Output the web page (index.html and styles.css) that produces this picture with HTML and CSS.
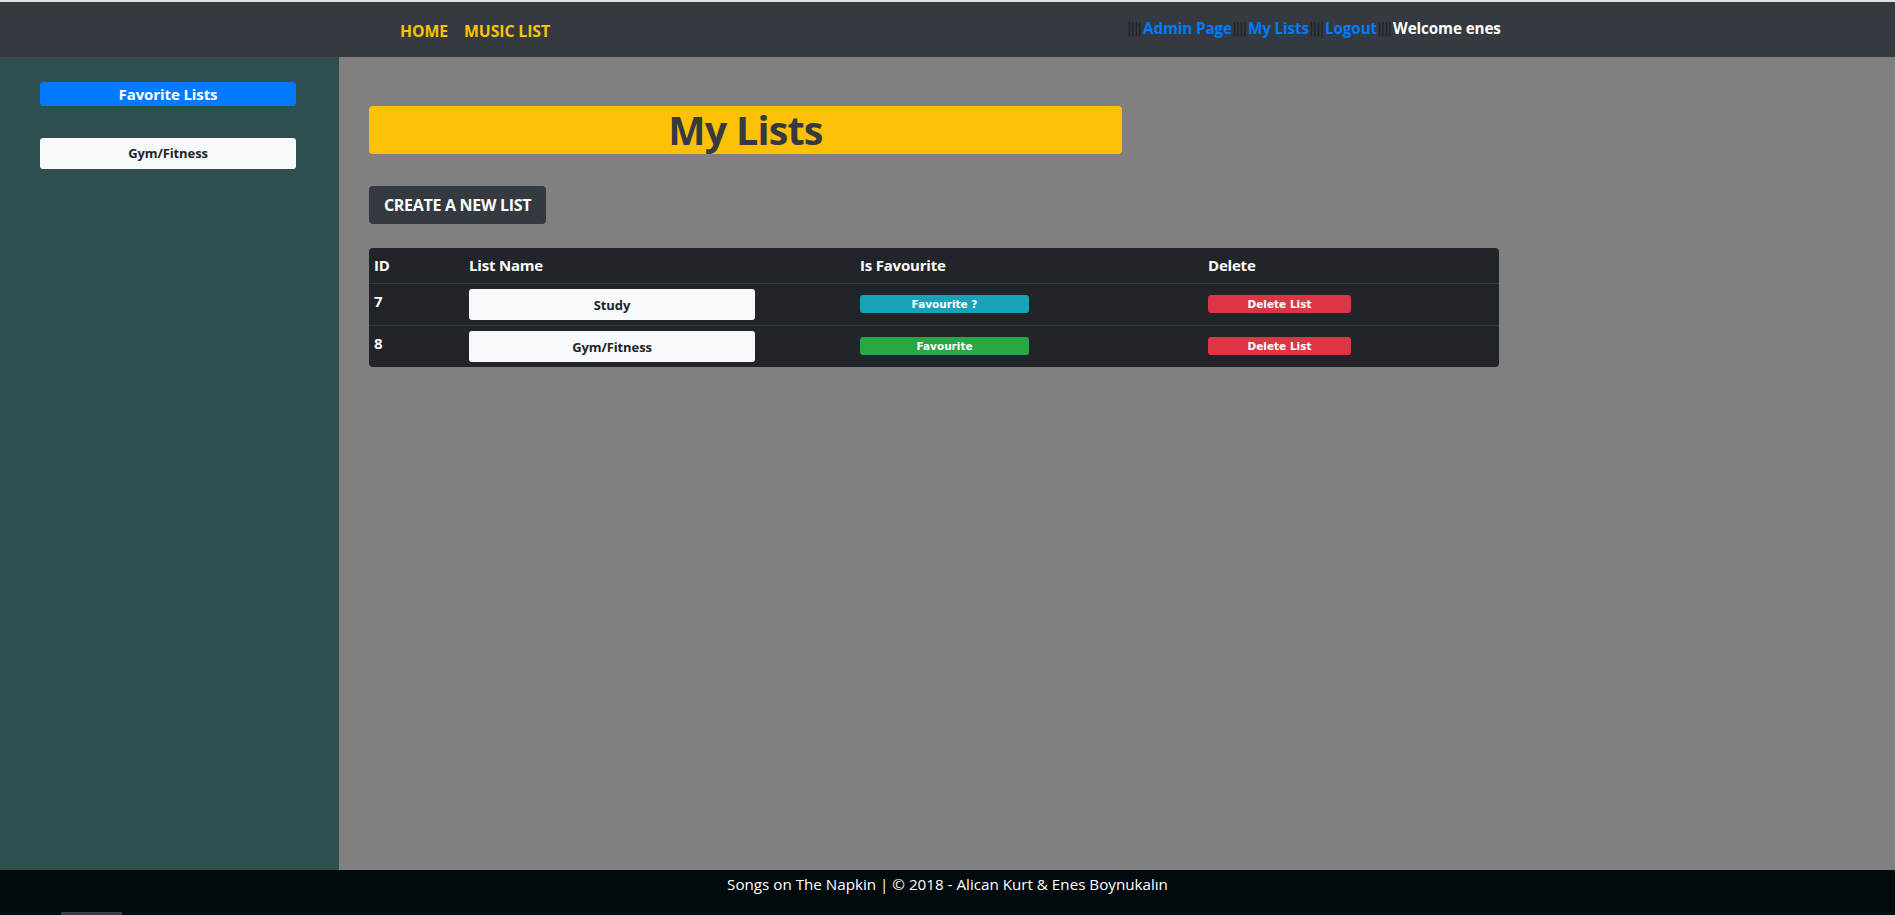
FILE: index.html
```html
<!DOCTYPE html>
<html lang="en">
<head>
<meta charset="utf-8">
<title>My Lists - Songs on The Napkin</title>
<link rel="stylesheet" href="styles.css">
</head>
<body>
<div class="page">
  <nav class="navbar">
    <div class="nav-left">
      <a class="nav-link" href="#">HOME</a>
      <a class="nav-link" href="#">MUSIC LIST</a>
    </div>
    <div class="nav-right">
      <span class="pipes">||||</span><a class="user-link" href="#">Admin Page</a><span class="pipes">||||</span><a class="user-link" href="#">My Lists</a><span class="pipes">||||</span><a class="user-link" href="#">Logout</a><span class="pipes">||||</span><span class="welcome">Welcome enes</span>
    </div>
  </nav>
  <div class="body-row">
    <aside class="sidebar">
      <div class="fav-title">Favorite Lists</div>
      <div class="fav-item">Gym/Fitness</div>
    </aside>
    <main class="main">
      <h1 class="title">My Lists</h1>
      <button class="create-btn">CREATE A NEW LIST</button>
      <table class="lists">
        <colgroup>
          <col class="c-id"><col class="c-name"><col class="c-fav"><col class="c-del">
        </colgroup>
        <thead>
          <tr><th>ID</th><th>List Name</th><th>Is Favourite</th><th>Delete</th></tr>
        </thead>
        <tbody>
          <tr>
            <td class="id-cell">7</td>
            <td><button class="name-btn">Study</button></td>
            <td><button class="badge fav-info">Favourite ?</button></td>
            <td><button class="badge del">Delete List</button></td>
          </tr>
          <tr>
            <td class="id-cell">8</td>
            <td><button class="name-btn">Gym/Fitness</button></td>
            <td><button class="badge fav-ok">Favourite</button></td>
            <td><button class="badge del">Delete List</button></td>
          </tr>
        </tbody>
      </table>
    </main>
  </div>
  <footer class="footer">
    <span>Songs on The Napkin | © 2018 - Alican Kurt &amp; Enes Boynukalın</span>
    <div class="footer-tab"></div>
  </footer>
</div>
</body>
</html>
```

FILE: styles.css
```css
* { box-sizing: border-box; }
html, body { margin: 0; padding: 0; }
body {
  font-family: "Open Sans", "Noto Sans", "DejaVu Sans", sans-serif;
  background: #808080;
  color: #212529;
}
.page {
  display: flex;
  flex-direction: column;
  height: 915px;
}
.navbar {
  height: 57px;
  border-top: 2px solid #dedfe0;
  background: #343a40;
  display: flex;
  align-items: center;
  flex-shrink: 0;
}
.nav-left {
  display: flex;
  gap: 16px;
  padding-left: 400px;
  margin-top: 3px;
  width: 1127px;
}
.nav-link {
  color: #ffc107;
  font-weight: 700;
  font-size: 15.8px;
  text-decoration: none;
  letter-spacing: -0.1px;
}
.nav-right {
  display: flex;
  align-items: center;
  margin-top: -3px;
  white-space: pre;
}
.pipes {
  color: #1c1f23;
  font-family: "DejaVu Sans", sans-serif;
  font-size: 14px;
  letter-spacing: -1.2px;
  margin-right: 2px;
}
.user-link {
  color: #007bff;
  font-weight: 700;
  font-size: 15.2px;
  text-decoration: none;
  letter-spacing: -0.1px;
}
.welcome {
  color: #ffffff;
  font-weight: 700;
  font-size: 15.2px;
  letter-spacing: -0.1px;
}
.body-row {
  flex: 1;
  display: flex;
}
.sidebar {
  width: 339px;
  background: #2f4f4f;
  padding: 25px 43px 0 40px;
  display: flex;
  flex-direction: column;
}
.fav-title {
  height: 24px;
  background: #007bff;
  color: #ffffff;
  border-radius: 4px;
  text-align: center;
  font-weight: 700;
  font-size: 15px;
  line-height: 24px;
  letter-spacing: -0.1px;
}
.fav-item {
  margin-top: 32px;
  height: 31px;
  background: #f8f9fa;
  color: #212529;
  border-radius: 3px;
  text-align: center;
  font-weight: 700;
  font-size: 13px;
  line-height: 31px;
  letter-spacing: -0.1px;
}
.main {
  flex: 1;
  background: #808080;
  padding: 49px 0 0 30px;
  display: flex;
  flex-direction: column;
  align-items: flex-start;
}
.title {
  margin: 0;
  width: 753px;
  height: 48px;
  background: #ffc107;
  color: #343a40;
  border-radius: 4px;
  text-align: center;
  font-size: 39.5px;
  font-weight: 700;
  line-height: 48px;
  letter-spacing: -0.8px;
}
.create-btn {
  margin-top: 32px;
  width: 177px;
  height: 38px;
  background: #343a40;
  color: #ffffff;
  border: none;
  border-radius: 4px;
  font-family: inherit;
  font-weight: 700;
  font-size: 16px;
  letter-spacing: -0.3px;
  padding: 0;
}
.lists {
  margin-top: 24px;
  width: 1130px;
  table-layout: fixed;
  border-collapse: separate;
  border-spacing: 0;
  background: #212529;
  color: #ffffff;
  border-radius: 4px;
  overflow: hidden;
}
.c-id { width: 95px; }
.c-name { width: 391px; }
.c-fav { width: 348px; }
.c-del { width: 296px; }
.lists th {
  text-align: left;
  font-size: 15px;
  font-weight: 700;
  letter-spacing: -0.2px;
  height: 35px;
  padding: 0 5px 1px;
  vertical-align: middle;
}
.lists td {
  border-top: 1px solid #32383e;
  padding: 5px;
  height: 42px;
  font-weight: 700;
  font-size: 15px;
  line-height: 20px;
  vertical-align: middle;
}
.lists td.id-cell {
  padding: 2px 5px 9px;
}
.name-btn {
  display: block;
  width: 286px;
  height: 31px;
  background: #f8f9fa;
  color: #212529;
  border: none;
  border-radius: 3px;
  font-family: inherit;
  font-weight: 700;
  font-size: 13px;
  letter-spacing: -0.1px;
  padding: 0;
}
.badge {
  display: block;
  height: 18px;
  margin-bottom: 2px;
  border: none;
  border-radius: 3px;
  color: #ffffff;
  font-family: "DejaVu Sans", sans-serif;
  font-weight: 700;
  font-size: 10.5px;
  padding: 0;
  line-height: 18px;
}
.fav-info { width: 169px; background: #17a2b8; }
.fav-ok { width: 169px; background: #28a745; }
.del { width: 143px; background: #dc3545; }
.footer {
  position: relative;
  height: 45px;
  flex-shrink: 0;
  background: #020a0d;
  color: #ffffff;
  text-align: center;
  font-size: 15.2px;
  padding-top: 4px;
  border-bottom: 4px solid #040d11;
}
.footer-tab {
  position: absolute;
  left: 61px;
  bottom: -4px;
  width: 61px;
  height: 3px;
  background: #3b3f44;
}
```
